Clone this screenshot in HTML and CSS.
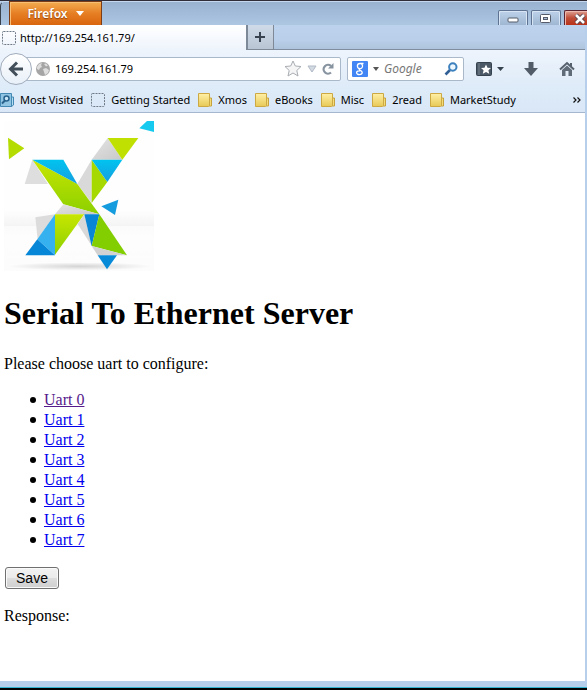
FILE: index.html
```html
<!DOCTYPE html>
<html lang="en">
<head>
<meta charset="utf-8">
<title>Serial To Ethernet Server</title>
<link rel="stylesheet" href="styles.css">
</head>
<body>
<div class="window">
  <header class="titlebar">
    <button class="app-menu" type="button">Firefox <svg width="8" height="5" viewBox="0 0 8 5"><path d="M0 0h8L4 5z" fill="#fff"/></svg></button>
    <div class="window-controls">
      <button class="control" type="button" aria-label="Minimize"><svg width="12" height="12" viewBox="0 0 12 12"><rect x="1" y="5" width="10" height="4" rx="1" fill="#fff" stroke="#555b68"/></svg></button>
      <button class="control" type="button" aria-label="Maximize"><svg width="12" height="12" viewBox="0 0 12 12"><rect x=".5" y="1.500" width="10" height="8" rx="1" fill="#fff" stroke="#555b68"/><rect x="3.500" y="4.500" width="4" height="2" fill="#a8bdd6" stroke="#555b68"/></svg></button>
      <button class="control close" type="button" aria-label="Close"><svg width="12" height="12" viewBox="0 0 12 12"><path d="M2 2l8 8M10 2l-8 8" stroke="#574650" stroke-width="4.500"/><path d="M2 2l8 8M10 2l-8 8" stroke="#fff" stroke-width="2.500"/></svg></button>
    </div>
  </header>
  <div class="frame">
    <div class="tabs">
      <div class="tab"><svg width="14" height="14" viewBox="0 0 14 14"><rect x=".5" y=".5" width="13" height="13" rx="1" fill="none" stroke="#6f7986" stroke-dasharray="2 1"/></svg><span>http://169.254.161.79/</span></div>
      <button class="new-tab" type="button" aria-label="New tab"><svg width="10" height="10" viewBox="0 0 10 10"><path d="M5 0v10M0 5h10" stroke="#38434f" stroke-width="2"/></svg></button>
    </div>
    <nav class="toolbar">
      <button class="back" type="button" aria-label="Back"><svg width="16" height="16" viewBox="0 0 16 16"><path d="M9 1.500L2.500 8 9 14.500M3 8h12" fill="none" stroke="#424f5a" stroke-width="3"/></svg></button>
      <div class="field address">
        <svg width="14" height="14" viewBox="0 0 14 14"><circle cx="7" cy="7" r="7" fill="#a5a5a5"/><path d="M1 5l2-3 3-1-1 2 1 2-2 1-1 2-2-1zM8 2l2-.5 2 2-2 1zM7 7l3-1 3 2-1 3-3 2-1-3z" fill="#dedede"/></svg>
        <input type="text" value="169.254.161.79" aria-label="Address">
        <svg width="18" height="17" viewBox="0 0 18 17"><path d="M9 1l2.300 5 5.700.5-4.200 4 1.200 5.500L9 13l-5 3 1.200-5.500L1 6.500 6.700 6z" fill="#f5f5f5" stroke="#a8adb3"/></svg>
        <svg width="10" height="8" viewBox="0 0 10 8"><path d="M1 1h8L5 7z" fill="#d3dae2" stroke="#b0bac6"/></svg>
        <svg width="12" height="12" viewBox="0 0 12 12"><path d="M9 9.500A4.400 4.400 0 1 1 9 3" fill="none" stroke="#8794a0" stroke-width="2.300"/><path d="M11.500 0v5.500H6z" fill="#8794a0"/></svg>
      </div>
      <div class="field search">
        <svg width="16" height="16" viewBox="0 0 16 16"><rect width="16" height="16" rx="1" fill="#4285f4"/><path d="M11.500 2.500H8a2.600 2.600 0 1 0 0 5.200 2.600 2.600 0 0 0 1.500-4.700M7.500 7.700c-1.500 1.500 2.700 1.600 2.700 3.900 0 2.700-5.600 2.600-5.600.2 0-1.600 1.800-2 3.500-1.900" fill="none" stroke="#fff" stroke-width="1.300"/></svg>
        <svg width="6" height="4" viewBox="0 0 6 4"><path d="M0 0h6L3 4z" fill="#555"/></svg>
        <input type="text" placeholder="Google" aria-label="Search">
        <svg width="14" height="14" viewBox="0 0 14 14"><path d="M6 8L1.500 12.500" stroke="#315f96" stroke-width="2.600"/><circle cx="8.800" cy="5" r="3.700" fill="#edf7ff" stroke="#3c81bd" stroke-width="2"/></svg>
      </div>
      <button class="tool bookmark-menu" type="button" aria-label="Bookmarks"><svg width="28" height="16" viewBox="0 0 28 16"><rect x=".5" y="1.500" width="15" height="13" rx="1" fill="#4b5865" stroke="#36424e"/><path d="M3 2v12" stroke="#7a8691"/><path d="M10 3.500l1.500 3.200 3.500.3-2.600 2.300.8 3.500L10 11l-3.200 1.800.8-3.500L5 7l3.500-.3z" fill="#fff"/><path d="M21 6h7l-3.500 4z" fill="#36424e"/></svg></button>
      <button class="tool download" type="button" aria-label="Downloads"><svg width="14" height="16" viewBox="0 0 14 16"><path d="M4.500 1h5v6H14l-7 8-7-8h4.500z" fill="#515c68"/></svg></button>
      <button class="tool home" type="button" aria-label="Home"><svg width="16" height="16" viewBox="0 0 16 16"><path d="M1 8.500L8 2l7 6.500M12 2v4" fill="none" stroke="#56616e" stroke-width="2"/><path d="M3 9l5-4.500L13 9v6H9.500v-5h-3v5H3z" fill="#606c78"/></svg></button>
    </nav>
    <nav class="bookmarks">
      <a class="mark" href="#"><svg width="14" height="16" viewBox="0 0 14 16"><path d="M10 5h3.500v8l-2 1.500z" fill="#b4dcf1" stroke="#4389b4"/><path d="M.5 1.500h11v13H.5z" fill="#8fc4e3" stroke="#4389b4"/><circle cx="6.500" cy="6.500" r="2.500" fill="#c8e7f8" stroke="#28628c" stroke-width="1.500"/><path d="M5 8.500L2 11.500" stroke="#28628c" stroke-width="2"/></svg><span>Most Visited</span></a>
      <a class="mark" href="#"><svg width="14" height="14" viewBox="0 0 14 14"><rect x=".5" y=".5" width="13" height="13" rx="1" fill="none" stroke="#6f7986" stroke-dasharray="2 1"/></svg><span>Getting Started</span></a>
      <a class="mark" href="#"><svg width="14" height="16" viewBox="0 0 14 16"><use href="#folder"/></svg><span>Xmos</span></a>
      <a class="mark" href="#"><svg width="14" height="16" viewBox="0 0 14 16"><use href="#folder"/></svg><span>eBooks</span></a>
      <a class="mark" href="#"><svg width="14" height="16" viewBox="0 0 14 16"><use href="#folder"/></svg><span>Misc</span></a>
      <a class="mark" href="#"><svg width="14" height="16" viewBox="0 0 14 16"><use href="#folder"/></svg><span>2read</span></a>
      <a class="mark" href="#"><svg width="14" height="16" viewBox="0 0 14 16"><use href="#folder"/></svg><span>MarketStudy</span></a>
      <button class="more" type="button" aria-label="More bookmarks"><svg width="8" height="6" viewBox="0 0 8 6"><path d="M.5.5L3 3 .5 5.500M4.500.5L7 3 4.500 5.500" fill="none" stroke="#111" stroke-width="1.200"/></svg></button>
    </nav>
    <main class="page">
      <svg class="logo" viewBox="12 27 450 450" role="img" aria-label="Logo">
        <defs>
          <linearGradient id="floor" x2="0" y2="1"><stop stop-color="#f7f7f7"/><stop offset=".25" stop-color="#fcfcfc"/><stop offset="1" stop-color="#fafafa"/></linearGradient>
          <linearGradient id="haze" x2="0" y2="1"><stop stop-color="#fdfefd"/><stop offset="1" stop-color="#f4f4f4"/></linearGradient>
          <linearGradient id="lime" x2="0" y2="1"><stop stop-color="#c8e600"/><stop offset="1" stop-color="#8cd000"/></linearGradient>
          <linearGradient id="sky" x2="0" y2="1"><stop stop-color="#00c4f0"/><stop offset="1" stop-color="#169edf"/></linearGradient>
          <linearGradient id="silver" x2="1" y2="1"><stop stop-color="#e5e5e5"/><stop offset="1" stop-color="#c8c8c8"/></linearGradient>
          <radialGradient id="shade"><stop stop-color="#d4d4d4"/><stop offset="1" stop-color="#fcfcfc"/></radialGradient>
          <linearGradient id="paper" x2="0" y2="1"><stop stop-color="#fff0a6"/><stop offset="1" stop-color="#e8c957"/></linearGradient>
          <g id="folder"><path d="M11 6h2.500v8H11z" fill="#f4dc79" stroke="#c7a33e"/><path d="M.5 1.500h11v12l-1 1H.5z" fill="url(#paper)" stroke="#cda943"/></g>
        </defs>
        <path d="M12 27h450v450H12z" fill="#fdfefd"/>
        <path d="M12 295h450v47H12z" fill="url(#haze)"/>
        <path d="M12 342h450v135H12z" fill="url(#floor)" opacity=".5"/>
        <ellipse cx="240" cy="463" rx="215" ry="12" fill="url(#shade)"/>
        <path d="M24 77l49 32-46 33z" fill="#b5dc00"/>
        <path d="M418 49l23-22h21v33z" fill="#16c9ef"/>
        <path d="M97 143l47 73H74z" fill="#dedede"/>
        <path d="M323 78l44 65h-92z" fill="url(#silver)"/>
        <path d="M323 78h92l-48 65z" fill="#bfe000"/>
        <path d="M275 143v130l-43-57z" fill="#d9d9d9"/>
        <path d="M275 143l47 67-47 63z" fill="#a6d900"/>
        <path d="M275 143h92l-45 67z" fill="url(#sky)"/>
        <path d="M97 143l135 73 66 91-108-30z" fill="url(#lime)"/>
        <path d="M97 143h93l42 73z" fill="url(#sky)"/>
        <path d="M190 277l108 30H165z" fill="url(#silver)"/>
        <path d="M106 316l59-9-52 75z" fill="#dcdcdc"/>
        <path d="M165 307v123l-53-48z" fill="#35b1ef"/>
        <path d="M112 382l53 48H76z" fill="#0586d7"/>
        <path d="M165 307h88l-88 121z" fill="url(#lime)"/>
        <path d="M253 307l22 94-42-65z" fill="#d8d8d8"/>
        <path d="M253 307h45l-23 96z" fill="#0985d5"/>
        <path d="M298 307l83 123-106-28z" fill="#83ce00"/>
        <path d="M275 402l106 28h-88z" fill="#d2d2d2"/>
        <path d="M293 430h58l-30 42z" fill="#078bd9"/>
        <path d="M304 283l51-20-10 46z" fill="#159cde"/>
      </svg>
      <h1>Serial To Ethernet Server</h1>
      <p>Please choose uart to configure:</p>
      <ul>
        <li><a class="seen" href="#">Uart 0</a></li>
        <li><a href="#">Uart 1</a></li>
        <li><a href="#">Uart 2</a></li>
        <li><a href="#">Uart 3</a></li>
        <li><a href="#">Uart 4</a></li>
        <li><a href="#">Uart 5</a></li>
        <li><a href="#">Uart 6</a></li>
        <li><a href="#">Uart 7</a></li>
      </ul>
      <button class="save" type="button">Save</button>
      <p>Response:</p>
    </main>
  </div>
</div>
</body>
</html>
```

FILE: styles.css
```css
* { box-sizing: border-box; }
body { margin: 0; background: #000; }
svg { display: block; flex: none; }
button, input { margin: 0; padding: 0; border: 0; background: none; font: inherit; }

.window {
  display: flex;
  flex-direction: column;
  min-height: 100vh;
  border-top: 1px solid #302d38;
  border-bottom: 2px solid #000;
  background: #bad0ea;
  font: 11px/16px "Noto Sans", "Open Sans", sans-serif;
  color: #000;
}

.titlebar {
  display: flex;
  justify-content: space-between;
  align-items: flex-end;
  height: 24px;
  padding-left: 8px;
  border-top: 1px solid #c5d7ec;
  border-left: 1px solid #38414c;
  border-top-left-radius: 5px;
  background: linear-gradient(#98b2d0, #adc6e2);
}
.app-menu {
  display: flex;
  align-items: center;
  justify-content: center;
  gap: 8px;
  width: 93px;
  height: 24px;
  border: 1px solid #7b3c16;
  border-bottom: 0;
  background: linear-gradient(#f3ac50, #e67e24 50%, #d9660f);
  box-shadow: inset 1px 1px #f7be75;
  color: #fff;
  font-size: 12px;
  font-weight: 600;
  text-shadow: 0 1px 1px #8a4310;
}
.window-controls { display: flex; gap: 3px; }
.control {
  display: flex;
  align-items: center;
  justify-content: center;
  width: 30px;
  height: 15px;
  padding-top: 2px;
  border: 1px solid #5d7391;
  border-bottom: 0;
  border-radius: 2px 2px 0 0;
  background: linear-gradient(#bdd1e9, #9fb7d2);
  box-shadow: inset 1px 1px #d8e5f4, inset -1px 0 #d8e5f4;
}
.close {
  width: 23px;
  padding-left: 7px;
  border-color: #5b2330;
  border-right: 0;
  border-top-right-radius: 0;
  background: linear-gradient(#dfa294, #bf4d38 50%, #b83318);
  box-shadow: inset 1px 1px #edb9ae;
}

.frame {
  display: flex;
  flex: 1;
  flex-direction: column;
  border-right: 2px solid #b7cfea;
  border-bottom: 6px solid #b7cfea;
  box-shadow: 0 1px #35b5cf;
  margin-bottom: 1px;
}
.tabs {
  display: flex;
  height: 25px;
  background: linear-gradient(#bdd2ec, #bad0ea 60%, #adc3dc);
  box-shadow: inset 0 -1px #7e8da0;
}
.tab {
  display: flex;
  align-items: center;
  gap: 4px;
  width: 42%;
  padding-left: 2px;
  background: linear-gradient(#fff, #eef4fc);
}
.new-tab {
  display: flex;
  align-items: center;
  justify-content: center;
  width: 28px;
  border: 1px solid #7e8997;
  border-top: 0;
  border-left-width: 2px;
  background: linear-gradient(#cfdbe8, #b9c5d2);
}

.toolbar {
  display: flex;
  align-items: center;
  height: 37px;
  padding-right: 10px;
  background: linear-gradient(#eef4fc, #deebf8);
}
.back {
  z-index: 1;
  display: flex;
  align-items: center;
  justify-content: center;
  width: 32px;
  height: 32px;
  border: 1px solid #a0acbc;
  border-radius: 50%;
  background: linear-gradient(#fff, #e8f0f8);
}
.field {
  display: flex;
  align-items: center;
  height: 24px;
  border: 1px solid #aab9ca;
  border-radius: 2px;
  background: #fff;
}
.field input { min-width: 0; flex: 1; outline: 0; }
.address {
  flex: 1;
  gap: 5px;
  margin-left: -10px;
  padding: 0 6px 0 13px;
}
.search {
  width: 117px;
  gap: 5px;
  margin-left: 6px;
  padding: 0 5px 0 4px;
}
.search input { font-size: 12px; }
.search input::placeholder { color: #777; font-style: italic; opacity: 1; }
.bookmark-menu { margin-left: 12px; }
.download { margin-left: 20px; }
.home { margin-left: 21px; }

.bookmarks {
  display: flex;
  align-items: center;
  gap: 8px;
  height: 26px;
  border-bottom: 1px solid #a5b7cf;
  background: linear-gradient(#deebf8, #d9e7f7);
}
.mark {
  display: flex;
  align-items: center;
  gap: 6px;
  color: #000;
  text-decoration: none;
  white-space: nowrap;
}
.more { margin-left: auto; padding-right: 4px; }

.page {
  flex: 1;
  padding: 8px 4px;
  background: #fff;
  font: 16px/20px "Liberation Serif", serif;
}
.logo { width: 150px; height: 150px; }
h1 { margin: 23px 0 22px; font-size: 32px; line-height: 38px; }
p { margin: 16px 0; }
ul { margin: 16px 0; padding-left: 26px; list-style: none; }
li { display: flex; align-items: center; gap: 8px; }
li::before { width: 6px; height: 6px; border-radius: 50%; background: #000; content: ""; }
.page a { color: #00e; }
.page .seen { color: #551a8b; }
.save {
  display: block;
  width: 54px;
  height: 22px;
  margin: 17px 1px;
  border: 1px solid #707070;
  border-radius: 3px;
  background: linear-gradient(#f2f2f2, #ebebeb 50%, #ddd 50%, #cfcfcf);
  box-shadow: inset 0 0 0 1px #fafafa;
  font: 14px/18px "Liberation Sans", sans-serif;
}
```
